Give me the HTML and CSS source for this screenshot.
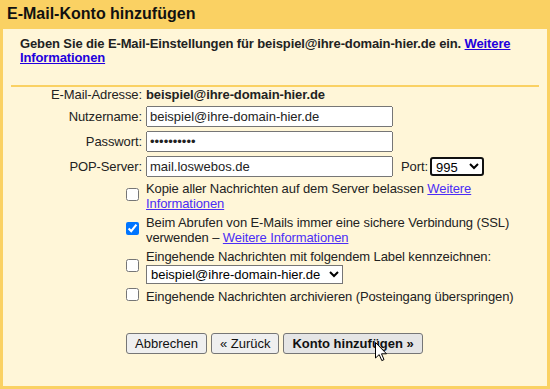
FILE: index.html
```html
<!DOCTYPE html>
<html lang="de">
<head>
  <meta charset="UTF-8">
  <meta name="viewport" content="width=device-width, initial-scale=1.0">
  <title>E-Mail-Konto hinzufügen</title>
  <link rel="stylesheet" href="styles.css">
</head>
<body>
  <h1 class="title">E-Mail-Konto hinzufügen</h1>
  <div class="panel">
    <div class="intro">
      Geben Sie die E-Mail-Einstellungen für beispiel@ihre-domain-hier.de ein. <a href="#">Weitere Informationen</a>
    </div>
    <div class="form">
      <span class="label">E-Mail-Adresse:</span>
      <span class="value">beispiel@ihre-domain-hier.de</span>

      <label class="label" for="user">Nutzername:</label>
      <div><input type="text" id="user" class="field" value="beispiel@ihre-domain-hier.de"></div>

      <label class="label" for="pass">Passwort:</label>
      <div><input type="password" id="pass" class="field" value="geheim1234"></div>

      <label class="label" for="pop">POP-Server:</label>
      <div class="server">
        <input type="text" id="pop" class="field" value="mail.loswebos.de">
        <label for="port">Port:</label>
        <select id="port" class="port">
          <option>995</option>
          <option>110</option>
        </select>
      </div>

      <div class="check"><input type="checkbox" id="keep"></div>
      <label class="option" for="keep">Kopie aller Nachrichten auf dem Server belassen <a href="#">Weitere Informationen</a></label>

      <div class="check"><input type="checkbox" id="ssl" checked></div>
      <label class="option" for="ssl">Beim Abrufen von E-Mails immer eine sichere Verbindung (SSL) verwenden – <a href="#">Weitere Informationen</a></label>

      <div class="check"><input type="checkbox" id="tag"></div>
      <div class="option">
        <label for="tag">Eingehende Nachrichten mit folgendem Label kennzeichnen:</label><br>
        <select class="tag-select">
          <option>beispiel@ihre-domain-hier.de</option>
        </select>
      </div>

      <div class="check"><input type="checkbox" id="archive"></div>
      <label class="option" for="archive">Eingehende Nachrichten archivieren (Posteingang überspringen)</label>
    </div>

    <div class="actions">
      <button type="button">Abbrechen</button>
      <button type="button">« Zurück</button>
      <button type="button" class="primary">Konto hinzufügen »</button>
      <svg class="cursor" width="13" height="20" viewBox="0 0 13 20">
        <path d="M0.5 0.5 L0.5 16 L4.2 12.6 L6.8 18.6 L9 17.6 L6.5 11.8 L11.5 11.8 Z" fill="#fff" stroke="#000" stroke-width="1"/>
      </svg>
    </div>
  </div>
</body>
</html>
```

FILE: styles.css
```css
body {
  margin: 0;
  height: 389px;
  background-color: #fad163;
  font-family: "Liberation Sans", Arial, sans-serif;
  font-size: 13px;
  letter-spacing: -0.1px;
  color: #222;
  padding: 0 3px 3px;
  box-sizing: border-box;
  display: flex;
  flex-direction: column;
}
.title {
  margin: 0;
  padding: 4px 4px 5px;
  font-size: 16px;
  line-height: 20px;
  letter-spacing: 0;
  color: #111;
}
.panel {
  flex: 1;
  background-color: #fff6d8;
  padding: 8px 8px 0;
  position: relative;
}
.intro {
  font-weight: bold;
  line-height: 14px;
  letter-spacing: -0.12px;
  padding: 0 9px 20px;
  border-bottom: 2px solid #fad163;
}
.intro a {
  color: #2200dd;
}
.form {
  display: grid;
  grid-template-columns: 131px auto;
  column-gap: 4px;
  row-gap: 4px;
  align-items: center;
  margin-top: 0;
}
.label {
  text-align: right;
}
.value {
  font-weight: bold;
  line-height: 15px;
}
.field {
  width: 247px;
  box-sizing: border-box;
  height: 21px;
  margin: 0;
  font-family: inherit;
  font-size: 13px;
  letter-spacing: 0;
  color: #222;
}
.server {
  display: flex;
  align-items: center;
  gap: 2px;
}
.server label {
  margin-left: 6px;
}
.port {
  width: 54px;
  height: 19px;
  font-family: inherit;
  font-size: 13px;
  border: 2px solid #111;
  border-radius: 3px;
  background: #fff;
  padding: 0;
}
.check {
  text-align: right;
}
.check input {
  margin: 0 3px 0 0;
  width: 13px;
  height: 13px;
}
.option {
  line-height: 15px;
}
.option a {
  color: #4b2ef5;
}
.tag-select {
  margin-top: 1px;
  width: 197px;
  font-family: inherit;
  font-size: 13px;
  height: 19px;
  padding: 0;
  background: #fff;
}
.actions {
  display: flex;
  gap: 4px;
  margin: 29px 0 0 115px;
  position: relative;
}
button {
  font-family: inherit;
  font-size: 13px;
  height: 21px;
  padding: 0 8px;
  color: #111;
  background-color: #efefef;
  border: 1px solid #767676;
  border-radius: 3px;
}
button.primary {
  font-weight: bold;
  background-color: #e5e5e5;
}
.cursor {
  position: absolute;
  left: 249px;
  top: 9px;
}
```
